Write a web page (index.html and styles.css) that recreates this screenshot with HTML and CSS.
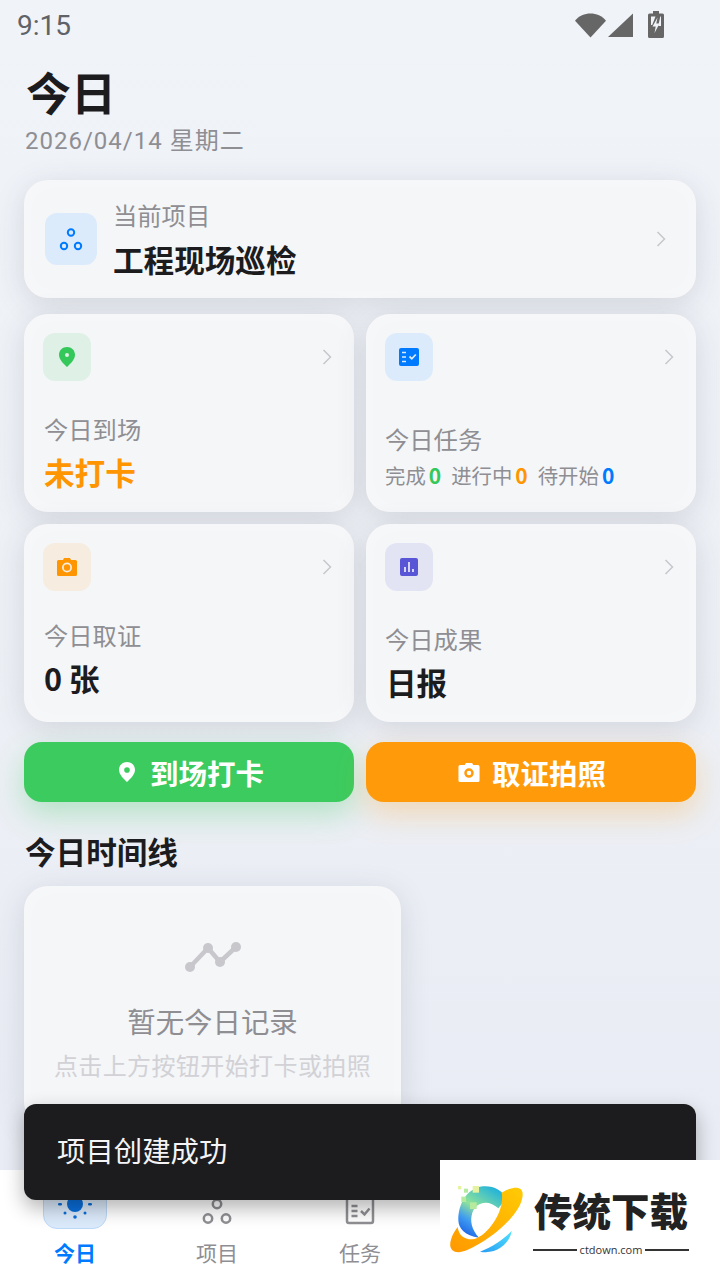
FILE: index.html
```html
<!DOCTYPE html>
<html lang="zh-CN">
<head>
<meta charset="utf-8">
<title>今日</title>
<link rel="stylesheet" href="styles.css">
</head>
<body>
<div class="page">
  <div class="status">
    <span class="time">9:15</span>
    <div class="status-icons">
      <svg class="st-wifi" width="31" height="26" viewBox="0 0 32 26"><path d="M0 8.500C4 3.500 10 1 16 1s12 2.500 16 7.500L16 26z" fill="#666"/></svg>
      <svg class="st-signal" width="26" height="26" viewBox="0 0 26 26"><path d="M25 1.500V25H0z" fill="#666"/></svg>
      <svg class="st-batt" width="16" height="27" viewBox="0 0 16 27"><path d="M5 0h6v2.500h3.500a1.500 1.500 0 0 1 1.500 1.500v21.500a1.500 1.500 0 0 1-1.500 1.500h-13A1.500 1.500 0 0 1 0 25.500V4a1.500 1.500 0 0 1 1.500-1.500H5z" fill="#666"/><path d="M3 5.500h4.500L4.200 14H3zM13 5.500v9.500h-2.800l2.100-9.500z" fill="#f0f3f8"/><path d="M9.500 6.500 4.500 15.500h3.200L6.500 22l5-9.500H8.300z" fill="#f0f3f8"/></svg>
    </div>
  </div>

  <main class="main">
    <h1 class="title">今日</h1>
    <p class="date">2026/04/14 星期二</p>

    <section class="card project">
      <div class="icon-box icon-project">
        <svg width="24" height="24" viewBox="0 0 24 24" fill="none" stroke="#007aff" stroke-width="2"><circle cx="12" cy="5.500" r="3.200"/><circle cx="5" cy="19" r="3.200"/><circle cx="19" cy="19" r="3.200"/></svg>
      </div>
      <div class="project-text">
        <div class="label">当前项目</div>
        <div class="project-name">工程现场巡检</div>
      </div>
      <svg class="chev" width="10" height="16" viewBox="0 0 10 16"><path d="M1.500 1 8.500 8l-7 7" fill="none" stroke="#c7c7cc" stroke-width="1.500"/></svg>
    </section>

    <section class="grid">
      <article class="card tile">
        <div class="tile-head">
          <div class="icon-small icon-green">
            <svg width="18" height="22" viewBox="0 0 18 22"><path fill-rule="evenodd" d="M9 1C4.500 1 1 4.400 1 8.700 1 13.500 5.500 17.500 9 21c3.500-3.500 8-7.500 8-12.300C17 4.400 13.500 1 9 1zm0 6a2 2 0 1 1 0 4 2 2 0 0 1 0-4z" fill="#34c759"/></svg>
          </div>
          <svg class="chev" width="10" height="16" viewBox="0 0 10 16"><path d="M1.500 1 8.500 8l-7 7" fill="none" stroke="#c7c7cc" stroke-width="1.500"/></svg>
        </div>
        <div class="label gap-32">今日到场</div>
        <div class="value orange">未打卡</div>
      </article>

      <article class="card tile">
        <div class="tile-head">
          <div class="icon-small icon-blue">
            <svg width="20" height="18" viewBox="0 0 20 18"><rect width="20" height="18" rx="2" fill="#007aff"/><path d="M3 4.500h4M3 9h4M3 13.500h4" stroke="#dcebfb" stroke-width="1.600"/><path d="m10.500 8.500 2.300 2.300 4-4.300" fill="none" stroke="#dcebfb" stroke-width="1.800"/></svg>
          </div>
          <svg class="chev" width="10" height="16" viewBox="0 0 10 16"><path d="M1.500 1 8.500 8l-7 7" fill="none" stroke="#c7c7cc" stroke-width="1.500"/></svg>
        </div>
        <div class="label gap-42">今日任务</div>
        <div class="task-stats">
          <span>完成<b class="green">0</b></span>
          <span>进行中<b class="orange">0</b></span>
          <span>待开始<b class="blue">0</b></span>
        </div>
      </article>

      <article class="card tile">
        <div class="tile-head">
          <div class="icon-small icon-orange">
            <svg width="20" height="18" viewBox="0 0 20 18"><path fill-rule="evenodd" d="M6 2 7 0h6l1 2h4.500A1.500 1.500 0 0 1 20 3.500v13a1.500 1.500 0 0 1-1.500 1.500h-17A1.500 1.500 0 0 1 0 16.500v-13A1.500 1.500 0 0 1 1.500 2zm4 2.500a5 5 0 1 0 0 10 5 5 0 0 0 0-10z" fill="#ff9500"/><circle cx="10" cy="9.500" r="3.200" fill="#ff9500"/></svg>
          </div>
          <svg class="chev" width="10" height="16" viewBox="0 0 10 16"><path d="M1.500 1 8.500 8l-7 7" fill="none" stroke="#c7c7cc" stroke-width="1.500"/></svg>
        </div>
        <div class="label gap-28">今日取证</div>
        <div class="value">0 张</div>
      </article>

      <article class="card tile">
        <div class="tile-head">
          <div class="icon-small icon-purple">
            <svg width="18" height="18" viewBox="0 0 18 18"><rect width="18" height="18" rx="2" fill="#5856d6"/><path d="M5 9v5M9 4v10M13 11v3" stroke="#e4e4f2" stroke-width="1.800"/></svg>
          </div>
          <svg class="chev" width="10" height="16" viewBox="0 0 10 16"><path d="M1.500 1 8.500 8l-7 7" fill="none" stroke="#c7c7cc" stroke-width="1.500"/></svg>
        </div>
        <div class="label gap-32">今日成果</div>
        <div class="value">日报</div>
      </article>
    </section>

    <section class="actions">
      <button class="btn btn-green">
        <svg width="18" height="22" viewBox="0 0 18 22"><path fill-rule="evenodd" d="M9 1C4.500 1 1 4.400 1 8.700 1 13.500 5.500 17.500 9 21c3.500-3.500 8-7.500 8-12.300C17 4.400 13.500 1 9 1zm0 5.200a2.800 2.800 0 1 1 0 5.600 2.800 2.800 0 0 1 0-5.600z" fill="#fff"/></svg>
        <span>到场打卡</span>
      </button>
      <button class="btn btn-orange">
        <svg width="22" height="19" viewBox="0 0 20 18"><path fill-rule="evenodd" d="M6 2 7 0h6l1 2h4.500A1.500 1.500 0 0 1 20 3.500v13a1.500 1.500 0 0 1-1.500 1.500h-17A1.500 1.500 0 0 1 0 16.500v-13A1.500 1.500 0 0 1 1.500 2zm4 3a4.500 4.500 0 1 0 0 9 4.500 4.500 0 0 0 0-9zm0 2.300a2.200 2.200 0 1 1 0 4.400 2.200 2.200 0 0 1 0-4.400z" fill="#fff"/></svg>
        <span>取证拍照</span>
      </button>
    </section>

    <h2 class="section-title">今日时间线</h2>

    <section class="card empty">
      <svg class="empty-icon" width="56" height="34" viewBox="0 0 56 34"><path d="M5 27 23 8l12 14L51 7" fill="none" stroke="#c7c7cc" stroke-width="4.500"/><g fill="#c7c7cc"><circle cx="5" cy="27" r="5"/><circle cx="23" cy="8" r="5"/><circle cx="35" cy="22" r="5"/><circle cx="51" cy="7" r="5"/></g></svg>
      <div class="empty-title">暂无今日记录</div>
      <div class="empty-sub">点击上方按钮开始打卡或拍照</div>
    </section>
  </main>

  <nav class="nav">
    <div class="tab tab-active">
      <div class="tab-pill">
        <svg width="34" height="34" viewBox="0 0 34 34"><circle cx="17" cy="18" r="8" fill="#0a6fdc"/><g fill="#0a6fdc"><circle cx="17" cy="31" r="1.800"/><circle cx="7" cy="27" r="1.500"/><circle cx="27" cy="27" r="1.500"/><rect x="0" y="17" width="4" height="2.400" rx="1.200"/><rect x="30" y="17" width="4" height="2.400" rx="1.200"/></g></svg>
      </div>
      <span>今日</span>
    </div>
    <div class="tab tab-shift">
      <svg class="tab-icon" width="30" height="30" viewBox="0 0 30 30" fill="none" stroke="#8e8e93" stroke-width="2.500"><circle cx="15" cy="5" r="4.200"/><circle cx="6" cy="19.500" r="4.200"/><circle cx="24" cy="19.500" r="4.200"/></svg>
      <span>项目</span>
    </div>
    <div class="tab">
      <svg class="tab-icon" width="30" height="30" viewBox="0 0 30 30" fill="none" stroke="#8e8e93" stroke-width="2.500"><rect x="2" y="-2" width="26" height="26" rx="2"/><path d="M6.500 7h6M6.500 12h6M6.500 17h6"/><path d="m16 12 3.500 3.500 5-6"/></svg>
      <span>任务</span>
    </div>
    <div class="tab"></div>
    <div class="tab"></div>
  </nav>

  <div class="toast">项目创建成功</div>

  <aside class="watermark">
    <svg class="wm-logo" width="280" height="120" viewBox="30 30 840 360">
      <defs>
        <linearGradient id="wmC" x1="0.800" y1="0" x2="0.200" y2="1"><stop offset="0" stop-color="#18aee0"/><stop offset="0.500" stop-color="#8fe39a"/><stop offset="0.750" stop-color="#3f9cf0"/><stop offset="1" stop-color="#1c62e6"/></linearGradient>
        <linearGradient id="wmO" x1="1" y1="0" x2="0" y2="1"><stop offset="0" stop-color="#ffcb05"/><stop offset="1" stop-color="#ff9800"/></linearGradient>
        <linearGradient id="wmL" x1="1" y1="0" x2="0" y2="1"><stop offset="0" stop-color="#4fe2ff"/><stop offset="1" stop-color="#2a9cf2"/></linearGradient>
      </defs>
      <path d="M230 145C215 118 185 104 150 110 110 120 85 160 85 210c0 25 20 48 62 53-22-25-28-50-20-75 12-34 50-40 78-13z" fill="url(#wmC)"/>
      <path d="M215 128c35-20 65-22 63 8-3 55-90 130-168 165-35 14-57 0-47-32 3-12 10-25 20-38 3 24 18 37 43 37 40-3 100-80 89-140z" fill="url(#wmO)"/>
      <path d="M150 305c40-15 75-40 95-63-5 38-45 73-95 63z" fill="url(#wmL)"/>
      <g fill="#e6f2a0"><rect x="84" y="108" width="10" height="10"/><rect x="128" y="108" width="19" height="20"/></g>
      <g fill="#b5ea9f"><rect x="102" y="116" width="12" height="12"/><rect x="94" y="140" width="14" height="16"/><rect x="120" y="157" width="20" height="20"/></g>
    </svg>
    <div class="wm-text">
      <div class="wm-name">传统下载</div>
      <div class="wm-domain"><i></i><span>ctdown.com</span><i></i></div>
    </div>
  </aside>
</div>
</body>
</html>
```

FILE: styles.css
```css
* { box-sizing: border-box; }
html, body { margin: 0; padding: 0; }
body {
  width: 720px;
  height: 1280px;
  overflow: hidden;
  font-family: "Noto Sans CJK SC", "Noto Sans", sans-serif;
  color: #1c1c1e;
}
.page {
  position: relative;
  width: 720px;
  height: 1280px;
  display: flex;
  flex-direction: column;
  overflow: hidden;
  background: linear-gradient(180deg, #f0f3f8 0%, #edf0f5 50%, #e8ebf4 100%);
}

/* status bar */
.status {
  height: 50px;
  flex: none;
  display: flex;
  align-items: center;
  justify-content: space-between;
  padding: 1px 56px 0 17px;
}
.time {
  font-family: Roboto, sans-serif;
  font-size: 28px;
  line-height: 49px;
  color: #5f6266;
}
.status-icons { display: flex; align-items: flex-end; height: 28px; margin-top: -4px; }
.st-signal { margin-left: 2px; }
.st-batt { margin-left: 14px; }

/* main */
.main {
  flex: 1;
  min-height: 0;
  overflow: hidden;
  padding: 0 24px;
}
.title {
  margin: 16px 0 0 2px;
  font-size: 45px;
  line-height: 52px;
  font-weight: 700;
}
.date {
  margin: 7px 0 0 1px;
  font-family: Roboto, "Noto Sans CJK SC", sans-serif;
  font-size: 24px;
  line-height: 32px;
  letter-spacing: 1px;
  color: #8e8e93;
}

.card {
  border-radius: 24px;
  background: #f5f6f8;
  box-shadow: 0 6px 30px rgba(60, 70, 90, 0.15), inset 0 0 24px rgba(255, 255, 255, 0.35);
}
.project {
  margin-top: 23px;
  height: 118px;
  display: flex;
  align-items: center;
  padding: 0 30px 0 21px;
}
.icon-box {
  width: 52px;
  height: 52px;
  border-radius: 12px;
  flex: none;
  display: flex;
  align-items: center;
  justify-content: center;
}
.icon-project { background: #dcebfb; }
.project-text { flex: 1; margin-left: 16px; }
.label {
  font-size: 24.3px;
  line-height: 32px;
  color: #8e8e93;
}
.project-name {
  margin-top: 7px;
  font-size: 30.6px;
  line-height: 42px;
  font-weight: 700;
}

.grid {
  margin-top: 16px;
  display: grid;
  grid-template-columns: 330px 330px;
  grid-auto-rows: 198px;
  gap: 12px;
}
.tile { padding: 19px 22px 0 19px; }
.tile:nth-child(odd) .label { margin-left: 1px; }
.tile-head {
  display: flex;
  align-items: center;
  justify-content: space-between;
}
.icon-small {
  width: 48px;
  height: 48px;
  border-radius: 12px;
  display: flex;
  align-items: center;
  justify-content: center;
}
.icon-green { background: #dff0e6; }
.icon-blue { background: #dcebfb; }
.icon-orange { background: #f6ecdf; }
.icon-purple { background: #e3e4f3; }
.gap-28 { margin-top: 28px; }
.gap-32 { margin-top: 32px; }
.gap-42 { margin-top: 42px; }
.value {
  margin: 5px 0 0 1px;
  font-size: 30.6px;
  line-height: 44px;
  font-weight: 700;
}
.orange { color: #ff9500; }
.green { color: #34c759; }
.blue { color: #007aff; }
.task-stats {
  margin-top: 6px;
  display: flex;
  gap: 10px;
  font-size: 20.4px;
  line-height: 28px;
  color: #8e8e93;
}
.task-stats b {
  margin-left: 3px;
  font-size: 21px;
  font-weight: 700;
}

.actions {
  margin-top: 20px;
  display: grid;
  grid-template-columns: 330px 330px;
  gap: 12px;
}
.btn {
  height: 60px;
  border: 0;
  border-radius: 18px;
  padding: 0;
  display: flex;
  align-items: center;
  justify-content: center;
  gap: 14px;
  color: #fff;
  font-family: inherit;
  font-size: 28.5px;
  font-weight: 700;
}
.btn-green {
  padding-left: 4px;
  background: #3ccb5f;
  box-shadow: 0 12px 30px rgba(52, 199, 89, 0.3);
}
.btn-orange {
  padding-left: 2px;
  gap: 12px;
  background: #ff9a0a;
  box-shadow: 0 12px 30px rgba(255, 149, 0, 0.26);
}

.section-title {
  margin: 29px 0 0 1px;
  font-size: 30.6px;
  line-height: 40px;
  font-weight: 700;
}
.empty {
  margin-top: 15px;
  width: 377px;
  height: 240px;
  display: flex;
  flex-direction: column;
  align-items: center;
  padding-top: 54px;
}
.empty-title {
  margin-top: 27px;
  font-size: 28.4px;
  line-height: 40px;
  color: #8e8e93;
}
.empty-sub {
  margin-top: 7px;
  font-size: 24px;
  line-height: 34px;
  letter-spacing: 0.4px;
  color: #d1d1d6;
  white-space: nowrap;
}

/* nav */
.nav {
  flex: none;
  height: 110px;
  display: grid;
  grid-template-columns: repeat(5, 1fr);
  background: #fff;
}
.tab {
  display: flex;
  flex-direction: column;
  align-items: center;
  font-size: 21px;
  line-height: 30px;
  color: #8e8e93;
}
.tab > span { position: absolute; top: 1237px; }
.tab-shift { padding-left: 2px; }
.tab-pill {
  margin: 0 0 0 6px;
  width: 64px;
  height: 59px;
  border-radius: 0 0 14px 14px;
  background: #dcebfc;
  border: 1px solid #bcd9f8;
  display: flex;
  align-items: flex-end;
  justify-content: center;
  padding-bottom: 8px;
}
.tab-active { color: #007aff; font-weight: 700; }
.tab-active > span { margin-left: 6px; }
.tab-icon { margin-top: 29px; }

/* overlays */
.toast {
  position: absolute;
  left: 24px;
  top: 1104px;
  width: 672px;
  height: 96px;
  border-radius: 12px;
  background: #1c1c1e;
  box-shadow: 0 8px 20px rgba(0, 0, 0, 0.3);
  color: #f4f4f6;
  font-size: 28.4px;
  line-height: 92px;
  padding-left: 33px;
}
.watermark {
  position: absolute;
  left: 440px;
  top: 1160px;
  width: 280px;
  height: 120px;
  background: #fff;
}
.wm-logo { position: absolute; left: 0; top: 0; }
.wm-text {
  position: absolute;
  left: 93px;
  top: 23px;
  width: 156px;
  display: flex;
  flex-direction: column;
  align-items: center;
}
.wm-name {
  font-size: 38.5px;
  line-height: 52px;
  font-weight: 900;
  color: #222;
  white-space: nowrap;
}
.wm-domain {
  width: 156px;
  margin-top: 7px;
  display: flex;
  align-items: center;
  gap: 3px;
  font-family: "Open Sans", sans-serif;
  font-size: 11px;
  line-height: 16px;
  color: #333;
}
.wm-domain i { flex: 1; height: 2px; background: #333; }
```
